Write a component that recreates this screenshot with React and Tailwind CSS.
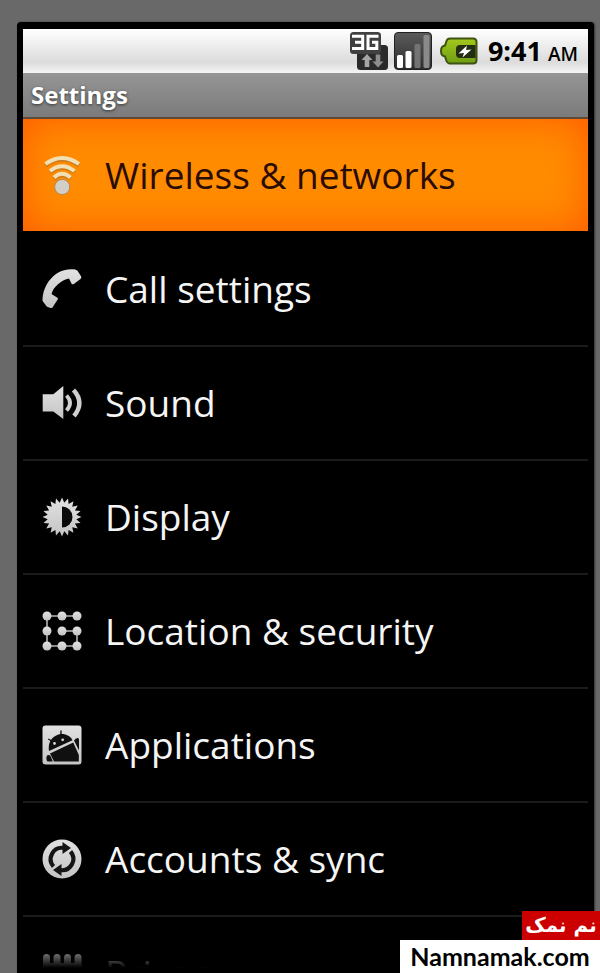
import React, { useState } from "react";

const SPIKES = Array.from({ length: 40 }, (_, i) => {
  const r = i % 2 === 0 ? 19.5 : 14.5;
  const a = (i / 40) * Math.PI * 2;
  return `${(20 + r * Math.sin(a)).toFixed(2)},${(20 - r * Math.cos(a)).toFixed(2)}`;
}).join(" ");

function Icon({ children }) {
  return (
    <svg viewBox="0 0 40 40" className="size-10 shrink-0" fill="url(#silver)" aria-hidden="true">
      {children}
    </svg>
  );
}

function WirelessIcon() {
  return (
    <Icon>
      <g fill="none" strokeLinecap="butt">
        <g stroke="#a8732f" strokeWidth="4" opacity="0.6">
          <path d="M3.500 10.500Q20 -1 37 10.500" />
          <path d="M8 17.500Q20 8 32.500 17.500" />
          <path d="M12 24Q20 16.500 28.500 24" />
        </g>
        <g stroke="#f3dfb4" strokeWidth="3.800">
          <path d="M3.500 9Q20 -3 37 9" />
          <path d="M8 16Q20 6.500 32.500 16" />
          <path d="M12 22.500Q20 15 28.500 22.500" />
        </g>
      </g>
      <circle cx="20.200" cy="32" r="7.600" fill="#d3cfc8" stroke="#b08a55" strokeWidth="1" />
    </Icon>
  );
}

function CallIcon() {
  return (
    <Icon>
      <path d="M14.700 4.500C19.500 1.500 25 .2 30.300 .3Q34 .3 35.500 1.700L39.200 7.500Q39.700 9 38.500 10L31.500 15.200Q30.300 15.700 29.600 14.700L27 9.500C19.500 11 11 18 9.500 25L15 28.500Q16.500 29.300 15.800 30.300L10.500 38.500Q9.700 39.300 8.500 39L5 37.700L.9 32.500Q.3 31.500 .5 30C1 20 6.500 10 14.700 4.500Z" />
    </Icon>
  );
}

function SoundIcon() {
  return (
    <Icon>
      <path d="M.7 11.300H11.300L21.300 3V36L11.300 28.500H.7Z" />
      <g fill="none" stroke="#cfcfcf">
        <path d="M24.500 12.500Q31.500 20 24.500 27.500" strokeWidth="3.800" />
        <path d="M31.500 7Q43 19.500 32 33" strokeWidth="4.400" />
      </g>
    </Icon>
  );
}

function DisplayIcon() {
  return (
    <Icon>
      <polygon points={SPIKES} />
      <path d="M20 9.500A10.500 10.500 0 0 1 20 30.500Z" fill="#0a0a0a" />
    </Icon>
  );
}

function LocationIcon() {
  const dots = [5, 20, 35];
  return (
    <Icon>
      <path d="M35 5H5V35H35V20H20" fill="none" stroke="#b5b5b5" strokeWidth="1.600" />
      {dots.map((y) => dots.map((x) => <circle key={`${x}-${y}`} cx={x} cy={y} r="4.500" />))}
    </Icon>
  );
}

function ApplicationsIcon() {
  return (
    <Icon>
      <rect x="0.500" y="0.500" width="39" height="39" rx="3" />
      <g fill="#101010">
        <path d="M7 26C5.500 17.500 10 11.500 16.500 9.500C22.500 8 28 10.500 30.500 15.200Z" />
        <path d="M8 28.500L31.300 17.500L36.800 30V36.500H12Z" />
        <path d="M32 15.500Q34 12.500 36 13Q37 13.500 37 15V25.500Z" />
        <path d="M5 30.500Q8 29 9 32L10.800 36.500H5.500Q3.500 34 5 30.500Z" />
      </g>
      <path d="M6.300 14L10.500 16.500M19 5.500V11" stroke="#101010" strokeWidth="1.400" />
      <circle cx="12.500" cy="18.500" r="1.400" />
      <circle cx="20.700" cy="14.800" r="1.400" />
    </Icon>
  );
}

function SyncIcon() {
  return (
    <Icon>
      <circle cx="20" cy="20" r="19.500" />
      <g fill="none" stroke="#151515" strokeWidth="4.200">
        <path d="M11.500 27.500A11.300 11.300 0 0 1 21 8.800" />
        <path d="M28.500 12.500A11.300 11.300 0 0 1 19 31.200" />
      </g>
      <path d="M20.500 3L29 9L20.500 15ZM19.500 37L11 31L19.500 25Z" fill="#151515" />
    </Icon>
  );
}

function PrivacyIcon() {
  return (
    <Icon>
      {[1, 11.500, 22, 32.500].map((x) => (
        <rect key={x} x={x} y="1" width="7" height="38" rx="3.500" />
      ))}
      <rect x="1" y="10" width="38.500" height="4" />
    </Icon>
  );
}

const items = [
  { label: "Wireless & networks", icon: WirelessIcon },
  { label: "Call settings", icon: CallIcon },
  { label: "Sound", icon: SoundIcon },
  { label: "Display", icon: DisplayIcon },
  { label: "Location & security", icon: LocationIcon },
  { label: "Applications", icon: ApplicationsIcon },
  { label: "Accounts & sync", icon: SyncIcon },
  { label: "Privacy", icon: PrivacyIcon },
];

function StatusBar() {
  return (
    <div className="flex h-11 shrink-0 items-center justify-end bg-linear-to-b from-white via-[#dcdcdc] via-75% to-[#f4f4f4] pr-[10px] text-black">
      <svg viewBox="0 0 38 38" className="mr-[6px] size-[38px]" aria-label="3G">
        <rect x="7" y="13" width="31" height="25" rx="3.500" fill="#2a2a2a" />
        <rect x="0" y="0" width="31" height="22" rx="3.500" fill="#404040" />
        <path d="M2 4.200H12.700V16.500H2M5 10.300H12" fill="none" stroke="#fff" strokeWidth="3" />
        <path d="M28.500 4.200H18V16.500H26.800V10.300H22" fill="none" stroke="#fff" strokeWidth="3" />
        <path d="M17 22L22.500 28H19.300V35H14.700V28H11.500Z" fill="#a5a5a5" />
        <path d="M28 35.500L33.500 29.500H30.300V22.500H25.700V29.500H22.500Z" fill="#8d8d8d" />
      </svg>
      <svg viewBox="0 0 38 38" className="mr-2 size-[38px]" aria-label="Signal strength">
        <rect x="0.500" y="0.500" width="37" height="37" rx="3.500" fill="url(#signal)" stroke="#222" />
        <rect x="3" y="23" width="6" height="13" rx="1.500" fill="#fff" />
        <rect x="11.500" y="19" width="6" height="17" rx="1.500" fill="#fff" />
        <rect x="20.500" y="12" width="6" height="24" rx="1.500" fill="#747474" />
        <rect x="29.500" y="3" width="6" height="33" rx="1.500" fill="#8a8a8a" />
      </svg>
      <svg viewBox="0 0 38 28" className="mr-[10px] h-7 w-[38px]" aria-label="Battery charging">
        <path
          d="M10 1.500H33Q36.500 1.500 36.500 5V23Q36.500 26.500 33 26.500H10Q7.500 26.500 6.500 24L5 19.500Q1 19 1 14Q1 9 5 8.500L6.500 4Q7.500 1.500 10 1.500Z"
          fill="url(#battery)"
          stroke="#3e5214"
          strokeWidth="2"
        />
        <path d="M20 8H35.500V21H20Q16 21 16 17V12Q16 8 20 8Z" fill="#222d14" />
        <path d="M27 8.500L18.500 16.500L24 16L22.500 20.500L31.500 12.500L26 13Z" fill="#fff" />
      </svg>
      <time className="flex items-baseline gap-[6px] pt-[2px] font-['Open_Sans',sans-serif] text-[27px] leading-9 font-bold">
        9:41 <span className="text-[19px] font-semibold">AM</span>
      </time>
    </div>
  );
}

export default function App() {
  const [selected, setSelected] = useState(0);

  return (
    <div className="flex h-screen flex-col overflow-hidden bg-[#696969] pt-[22px] pr-[6px] pl-[17px] font-['Open_Sans','Noto_Sans',sans-serif]">
      <svg className="absolute size-0" aria-hidden="true">
        <defs>
          <linearGradient id="silver" x1="0" y1="0" x2="0" y2="1">
            <stop offset="0" stopColor="#e2e2e2" />
            <stop offset="1" stopColor="#c4c4c4" />
          </linearGradient>
          <linearGradient id="signal" x1="0" y1="0" x2="0" y2="1">
            <stop offset="0" stopColor="#5c5c5c" />
            <stop offset="1" stopColor="#2c2c2c" />
          </linearGradient>
          <linearGradient id="battery" x1="0" y1="0" x2="0" y2="1">
            <stop offset="0" stopColor="#a3c81c" />
            <stop offset="1" stopColor="#6f9d12" />
          </linearGradient>
        </defs>
      </svg>

      <div className="flex min-h-0 flex-1 flex-col rounded-t-sm bg-black px-[6px] pt-[7px] pb-[5px] shadow-[1px_0_2px_#333]">
        <StatusBar />
        <h1 className="h-[46px] shrink-0 border-b-2 border-[#5e4a38] bg-linear-to-b from-[#959595] to-[#7b7b7b] px-2 text-[24px] leading-[44px] font-bold text-white [text-shadow:0_1px_3px_#333]">
          Settings
        </h1>

        <ul className="relative min-h-0 flex-1 overflow-hidden">
          {items.map(({ label, icon: ItemIcon }, i) => (
            <li key={label} className={`h-[114px] border-b-2 ${i === selected ? "border-black" : "border-[#1b1b1b]"}`}>
              <button
                type="button"
                onClick={() => setSelected(i)}
                className={`flex size-full items-center gap-[23px] px-[19px] text-left text-[37px] leading-[48px] whitespace-nowrap ${
                  i === selected
                    ? "bg-[#ff8c00] text-[#2b0c05] shadow-[inset_0_0_40px_#ff5a00]"
                    : "text-[#f5f5f5]"
                }`}
              >
                <ItemIcon />
                {label}
              </button>
            </li>
          ))}
          <li className="pointer-events-none absolute inset-x-0 bottom-0 h-5 bg-linear-to-b from-black/30 to-black" aria-hidden="true" />
        </ul>
      </div>

      <a href="#" className="fixed right-0 bottom-0 flex flex-col items-end">
        <span dir="rtl" lang="fa" className="h-[29px] w-[78px] bg-[#cc0000] text-center font-['DejaVu_Sans',sans-serif] text-[20px] leading-[28px] font-bold whitespace-nowrap text-white">
          نم نمک
        </span>
        <span className="h-[33px] w-[200px] bg-white text-center font-['Lato',sans-serif] text-[25px] leading-[33px] font-bold text-black">
          Namnamak.com
        </span>
      </a>
    </div>
  );
}
